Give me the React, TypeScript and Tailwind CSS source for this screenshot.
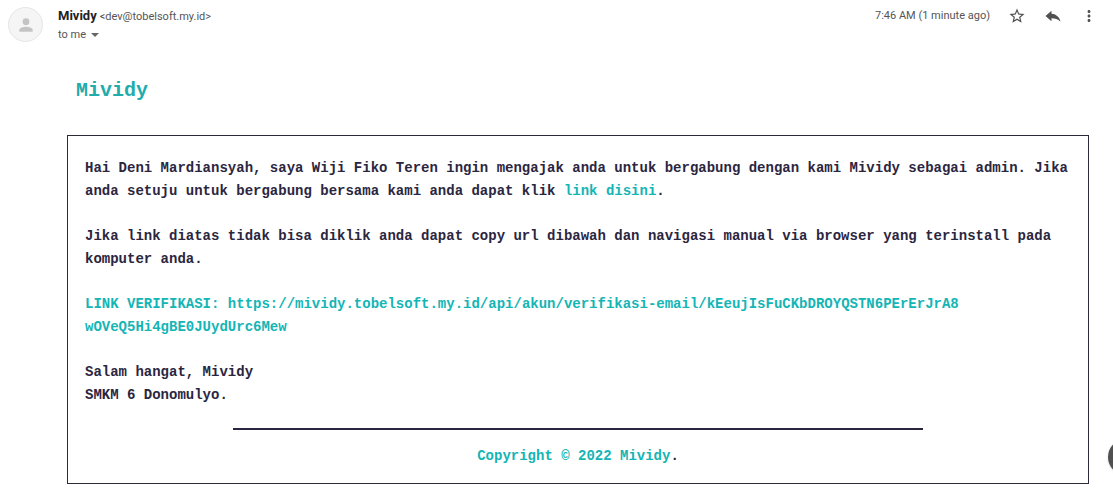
import type { ReactNode } from "react";

function IconButton({ label, children }: { label: string; children: ReactNode }) {
  return (
    <button type="button" aria-label={label} className="flex size-[18px] items-center justify-center text-[#505050]">
      <svg viewBox="0 0 24 24" className="size-full" fill="currentColor" aria-hidden="true">
        {children}
      </svg>
    </button>
  );
}

function MessageHeader() {
  return (
    <header className="flex items-start pt-[7px] pr-[15px] pl-2 font-['Roboto',sans-serif] text-[11px] leading-[18px] text-[#555]">
      <div className="flex size-[35px] shrink-0 items-center justify-center rounded-full border border-[#e6e6e6] bg-[#f5f5f5]">
        <svg viewBox="0 0 24 24" className="size-5" fill="#c4c4c4" aria-hidden="true">
          <circle cx="12" cy="8" r="4" />
          <path d="M4 20v-2c0-2.700 5.300-4 8-4s8 1.300 8 4v2z" />
        </svg>
      </div>
      <div className="ml-[15px] grow">
        <div className="flex items-baseline gap-[3px]">
          <span className="text-[13px] font-bold text-[#202124]">Mividy</span>
          <span>&lt;dev@tobelsoft.my.id&gt;</span>
        </div>
        <button type="button" className="flex items-center gap-[5px]">
          to me
          <svg viewBox="0 0 8 4" className="h-1 w-2" fill="#666" aria-hidden="true">
            <path d="M0 0h8L4 4z" />
          </svg>
        </button>
      </div>
      <div className="flex items-center">
        <time className="mr-[18px]">7:46 AM (1 minute ago)</time>
        <div className="flex gap-[18px]">
          <IconButton label="Star">
            <path d="M22 9.240l-7.190-.620L12 2 9.190 8.630 2 9.240l5.460 4.730L5.820 21 12 17.270 18.180 21l-1.630-7.030L22 9.240zM12 15.400l-3.760 2.270 1-4.280-3.320-2.880 4.380-.380L12 6.100l1.710 4.040 4.380.380-3.320 2.880 1 4.280L12 15.400z" />
          </IconButton>
          <IconButton label="Reply">
            <path d="M10 9V5l-8 7 8 7v-4.100c5 0 8.500 1.100 12 4.600-1-5-5-10-12-10.500z" />
          </IconButton>
          <IconButton label="More">
            <path d="M12 8c1.100 0 2-.9 2-2s-.9-2-2-2-2 .9-2 2 .9 2 2 2zm0 2c-1.100 0-2 .9-2 2s.9 2 2 2 2-.9 2-2-.9-2-2-2zm0 6c-1.100 0-2 .9-2 2s.9 2 2 2 2-.9 2-2-.9-2-2-2z" />
          </IconButton>
        </div>
      </div>
    </header>
  );
}

export default function App() {
  return (
    <div className="relative overflow-hidden bg-white pb-[13px]">
      <MessageHeader />
      <main className="mt-[31px] mr-6 ml-[67px] font-['Liberation_Mono',monospace] font-bold text-[#2b2640]">
        <h1 className="pl-[9px] text-[20px] leading-8 text-[#22acac]">Mividy</h1>
        <section className="mt-7 border border-[#2b2b3a] px-[17px] pt-[21px] pb-[15px] text-[14px] leading-[23px]">
          <div className="space-y-[22px]">
            <p>
              Hai Deni Mardiansyah, saya Wiji Fiko Teren ingin mengajak anda untuk bergabung dengan kami Mividy
              sebagai admin. Jika anda setuju untuk bergabung bersama kami anda dapat klik{" "}
              <a href="#verifikasi" className="text-[#13b5b5]">link disini</a>.
            </p>
            <p>
              Jika link diatas tidak bisa diklik anda dapat copy url dibawah dan navigasi manual via browser yang
              terinstall pada komputer anda.
            </p>
            <p id="verifikasi" className="text-[#13b5b5]">
              LINK VERIFIKASI:{" "}
              <a href="https://mividy.tobelsoft.my.id/api/akun/verifikasi-email/kEeujIsFuCKbDROYQSTN6PErErJrA8wOVeQ5Hi4gBE0JUydUrc6Mew">
                https://mividy.tobelsoft.my.id/api/akun/verifikasi-email/kEeujIsFuCKbDROYQSTN6PErErJrA8
                <br />
                wOVeQ5Hi4gBE0JUydUrc6Mew
              </a>
            </p>
            <p>
              Salam hangat, Mividy
              <br />
              SMKM 6 Donomulyo.
            </p>
          </div>
          <hr className="mx-auto mt-[21px] w-[70%] border-t-2 border-[#2b2640]" />
          <p className="mt-[15px] text-center">
            <span className="text-[#13b5b5]">Copyright © 2022 Mividy</span>.
          </p>
        </section>
      </main>
      <button
        type="button"
        aria-label="Show side panel"
        className="absolute -right-[31px] bottom-[22px] size-9 rounded-full bg-[#505050] shadow"
      />
    </div>
  );
}
